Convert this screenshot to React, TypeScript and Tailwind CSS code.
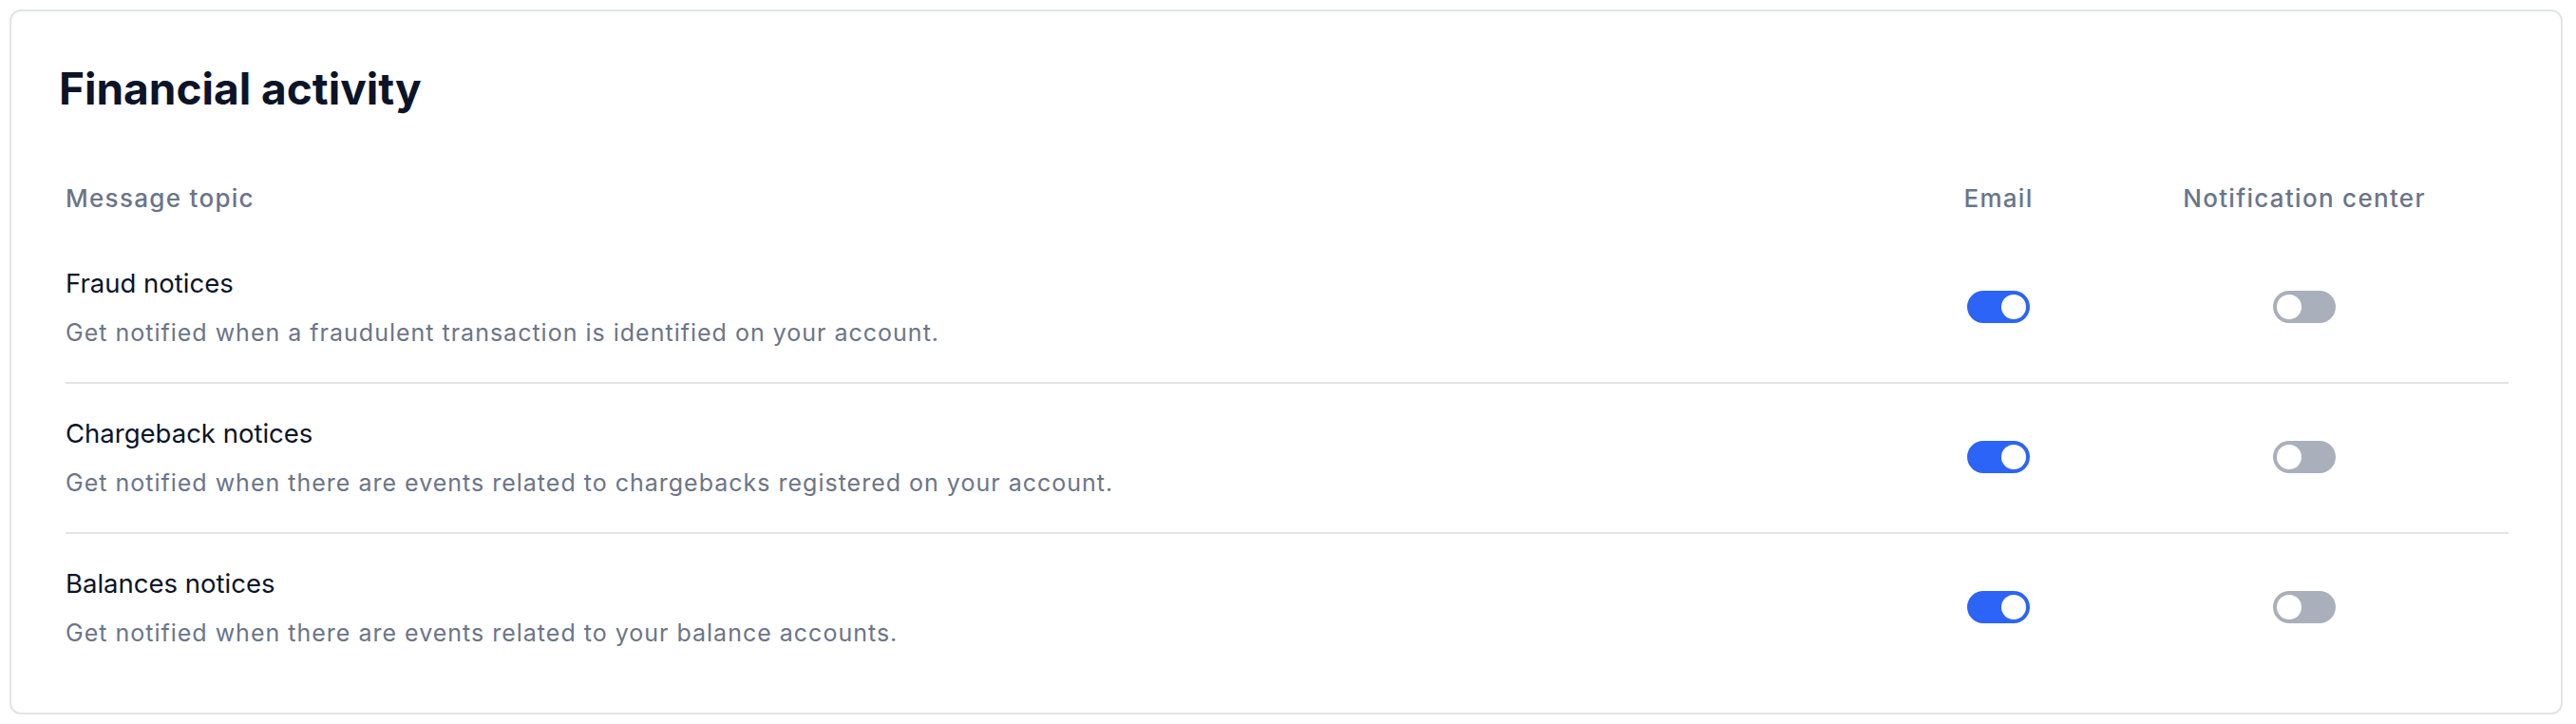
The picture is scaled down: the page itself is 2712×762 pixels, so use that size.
import React, { useState } from 'react';

// ----------------------------------------------------------------
// Data
// ----------------------------------------------------------------
interface Topic {
  id: string;
  title: string;
  description: string;
  email: boolean;
  notificationCenter: boolean;
}

const TOPICS: Topic[] = [
  {
    id: 'fraud',
    title: 'Fraud notices',
    description: 'Get notified when a fraudulent transaction is identified on your account.',
    email: true,
    notificationCenter: false,
  },
  {
    id: 'chargeback',
    title: 'Chargeback notices',
    description: 'Get notified when there are events related to chargebacks registered on your account.',
    email: true,
    notificationCenter: false,
  },
  {
    id: 'balances',
    title: 'Balances notices',
    description: 'Get notified when there are events related to your balance accounts.',
    email: true,
    notificationCenter: false,
  },
];

// ----------------------------------------------------------------
// Toggle
// ----------------------------------------------------------------
function Toggle({ checked, onChange }: { checked: boolean; onChange: () => void }) {
  return (
    <button
      type="button"
      role="switch"
      aria-checked={checked}
      onClick={onChange}
      className={`flex h-[34px] w-[66px] items-center rounded-full p-[4px] transition-colors ${
        checked ? 'justify-end bg-[#2b64f6]' : 'justify-start bg-[#a9afbb]'
      }`}
    >
      <span className="h-[26px] w-[26px] rounded-full bg-white" />
    </button>
  );
}

// ----------------------------------------------------------------
// App
// ----------------------------------------------------------------
export default function App() {
  const [topics, setTopics] = useState(TOPICS);

  const flip = (id: string, key: 'email' | 'notificationCenter') =>
    setTopics((prev) => prev.map((t) => (t.id === id ? { ...t, [key]: !t[key] } : t)));

  return (
    <div className="min-h-screen bg-white p-[10px] font-['Inter',sans-serif]">
      <div className="w-[2688px] rounded-[12px] border-2 border-[#e2e4e8] pb-[32px] pl-[50px] pr-[55px] pt-[53px]">
        {/* Header */}
        <h2 className="text-[46px] font-bold leading-[56px] text-[#0b1429]">Financial activity</h2>

        <div className="mt-[70px] pl-[7px]">
          {/* Column headings */}
          <div className="grid grid-cols-[1fr_214px_430px] text-[26px] font-medium leading-[36px] tracking-[0.05em] text-[#6b7589]">
            <div>Message topic</div>
            <div className="text-center">Email</div>
            <div className="text-center">Notification center</div>
          </div>

          {/* Rows */}
          <div className="mt-[19px]">
            {topics.map((t, i) => (
              <div
                key={t.id}
                className={`grid grid-cols-[1fr_214px_430px] items-center pb-[34px] pt-[32px] ${
                  i < topics.length - 1 ? 'border-b-2 border-[#e2e4e8]' : ''
                }`}
              >
                <div>
                  <div className="text-[27.5px] leading-[40px] text-[#0b1429]">{t.title}</div>
                  <div className="mt-[14px] text-[25px] leading-[36px] tracking-[0.04em] text-[#6b7589]">
                    {t.description}
                  </div>
                </div>
                <div className="flex justify-center">
                  <Toggle checked={t.email} onChange={() => flip(t.id, 'email')} />
                </div>
                <div className="flex justify-center">
                  <Toggle
                    checked={t.notificationCenter}
                    onChange={() => flip(t.id, 'notificationCenter')}
                  />
                </div>
              </div>
            ))}
          </div>
        </div>
      </div>
    </div>
  );
}
